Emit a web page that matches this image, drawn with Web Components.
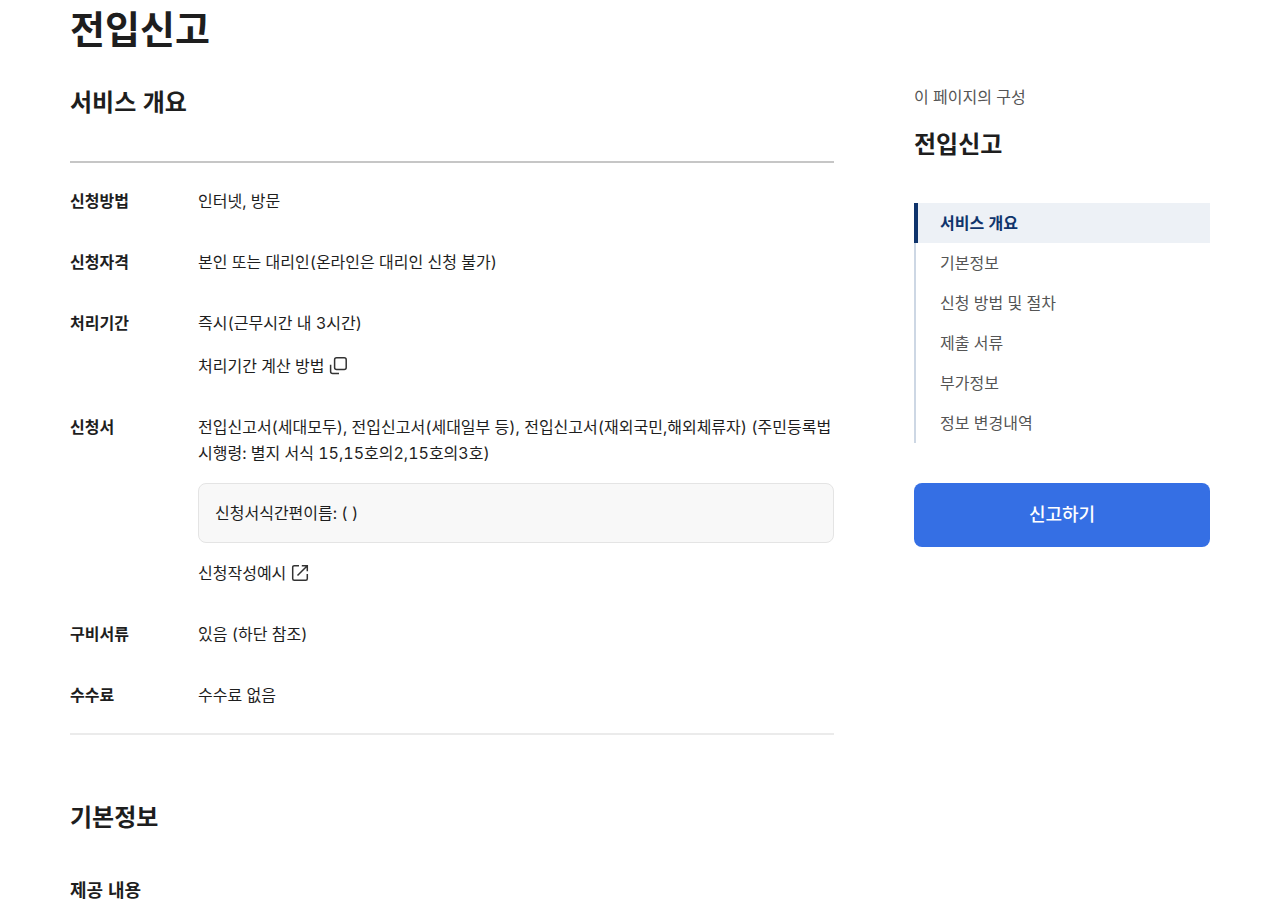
<!DOCTYPE html>
<html lang="ko">
<head>
<meta charset="utf-8">
<meta name="viewport" content="width=device-width, initial-scale=1">
<title>전입신고</title>
<style>
  :root {
    --color-text: #1e1e1e;
    --color-sub: #555;
    --color-primary: #356fe4;
    --color-navy: #0f346c;
  }
  body {
    margin: 0;
    background: #fff;
    color: var(--color-text);
    font-family: Inter, "Noto Sans CJK KR", sans-serif;
    font-size: 16px;
    line-height: 26px;
    font-variant-numeric: tabular-nums;
    word-break: keep-all;
  }
</style>
</head>
<body>
<gov-page>
  <gov-title level="1">전입신고</gov-title>

  <gov-section>
    <gov-title level="2">서비스 개요</gov-title>
    <gov-info-list>
      <gov-info-row label="신청방법"><span>인터넷, 방문</span></gov-info-row>
      <gov-info-row label="신청자격"><span>본인 또는 대리인(온라인은 대리인 신청 불가)</span></gov-info-row>
      <gov-info-row label="처리기간">
        <span>즉시(근무시간 내 3시간)</span>
        <gov-text-action icon="popup">처리기간 계산 방법</gov-text-action>
      </gov-info-row>
      <gov-info-row label="신청서">
        <span>전입신고서(세대모두), 전입신고서(세대일부 등), 전입신고서(재외국민,해외체류자) (주민등록법 시행령: 별지 서식 15,15호의2,15호의3호)</span>
        <gov-note>신청서식간편이름: ( )</gov-note>
        <gov-text-action icon="external" href="#example">신청작성예시</gov-text-action>
      </gov-info-row>
      <gov-info-row label="구비서류"><span>있음 (하단 참조)</span></gov-info-row>
      <gov-info-row label="수수료"><span>수수료 없음</span></gov-info-row>
    </gov-info-list>
  </gov-section>

  <gov-section>
    <gov-title level="2">기본정보</gov-title>
    <gov-title level="3">제공 내용</gov-title>
  </gov-section>

  <gov-side-nav slot="aside" caption="이 페이지의 구성" heading="전입신고">
    <gov-nav-item href="#summary" current>서비스 개요</gov-nav-item>
    <gov-nav-item href="#basic">기본정보</gov-nav-item>
    <gov-nav-item href="#process">신청 방법 및 절차</gov-nav-item>
    <gov-nav-item href="#documents">제출 서류</gov-nav-item>
    <gov-nav-item href="#extra">부가정보</gov-nav-item>
    <gov-nav-item href="#history">정보 변경내역</gov-nav-item>
    <gov-button slot="action">신고하기</gov-button>
  </gov-side-nav>
</gov-page>

<script>
// Base: attaches the shadow root and fills it with render()
class GovElement extends HTMLElement {
  constructor() {
    super()
    this.attachShadow({mode: 'open'})
  }

  connectedCallback() {
    this.shadowRoot.innerHTML = this.render()
  }
}

// Two columns: the article and the side navigation
class GovPage extends GovElement {
  render() {
    return `
      <style>
        :host {
          display: flex;
          align-items: flex-start;
          gap: 80px;
          padding: 0 70px;
        }
        main {
          flex: 1;
          min-width: 0;
        }
        aside {
          flex: 0 0 296px;
          padding-top: 84px;
        }
        @media (max-width: 900px) {
          :host { flex-direction: column; gap: 40px; padding: 0 24px; }
          main { flex: none; width: 100%; }
          aside { flex: none; width: 100%; padding-top: 0; }
        }
      </style>
      <main><slot></slot></main>
      <aside><slot name="aside"></slot></aside>
    `
  }
}

class GovTitle extends GovElement {
  render() {
    const level = this.getAttribute('level') || '2'
    return `
      <style>
        :host { display: block; }
        h1, h2, h3 { margin: 0; font-weight: 700; }
        h1 { font-size: 38px; line-height: 58px; }
        h2 { font-size: 24px; line-height: 36px; }
        h3 { font-size: 18px; line-height: 30px; }
      </style>
      <h${level}><slot></slot></h${level}>
    `
  }
}

class GovSection extends GovElement {
  render() {
    return `
      <style>
        :host {
          display: flex;
          flex-direction: column;
          gap: 40px;
          padding: 27px 0 38px;
        }
      </style>
      <slot></slot>
    `
  }
}

class GovInfoList extends GovElement {
  render() {
    return `
      <style>
        :host {
          display: flex;
          flex-direction: column;
          gap: 35px;
          padding: 25px 0;
          border-top: 2px solid #c6c6c6;
          border-bottom: 2px solid #ebebeb;
        }
      </style>
      <slot></slot>
    `
  }
}

class GovInfoRow extends GovElement {
  render() {
    return `
      <style>
        :host {
          display: grid;
          grid-template-columns: 112px minmax(0, 1fr);
          gap: 16px;
        }
        strong { font-weight: 700; }
        div {
          display: flex;
          flex-direction: column;
          gap: 17px;
        }
      </style>
      <strong>${this.getAttribute('label')}</strong>
      <div><slot></slot></div>
    `
  }
}

const ICONS = {
  popup: `
    <rect x="6.6" y="1.8" width="11.6" height="11.6" rx="2"/>
    <path d="M2.6 8.8v6.6a2 2 0 0 0 2 2H11"/>`,
  external: `
    <path d="M9 2.7H4.2a1.5 1.5 0 0 0-1.5 1.5v11.6a1.5 1.5 0 0 0 1.5 1.5h11.6a1.5 1.5 0 0 0 1.5-1.5V11"/>
    <path d="M11.8 2.7h5.5v5.5M17.3 2.7L7.5 12.5"/>`
}

// Text with an icon behind it: a link when it has an href, else a button
class GovTextAction extends GovElement {
  render() {
    const href = this.getAttribute('href')
    const tag = href ? 'a' : 'button'
    return `
      <style>
        :host { display: flex; }
        a, button {
          display: inline-flex;
          align-items: center;
          gap: 4px;
          margin: 0;
          padding: 0;
          border: 0;
          background: none;
          color: inherit;
          font: inherit;
          text-decoration: none;
          cursor: pointer;
        }
        svg {
          width: 20px;
          height: 20px;
          fill: none;
          stroke: #333;
          stroke-width: 1.5;
        }
      </style>
      <${tag} ${href ? `href="${href}"` : 'type="button"'}>
        <slot></slot>
        <svg viewBox="0 0 20 20" aria-hidden="true">${ICONS[this.getAttribute('icon')]}</svg>
      </${tag}>
    `
  }
}

class GovNote extends GovElement {
  render() {
    return `
      <style>
        :host {
          display: block;
          padding: 16px;
          border: 1px solid #e4e4e4;
          border-radius: 8px;
          background: #f8f8f8;
        }
      </style>
      <slot></slot>
    `
  }
}

class GovSideNav extends GovElement {
  render() {
    return `
      <style>
        :host { display: block; }
        p { margin: 0 0 17px; color: var(--color-sub); }
        h2 { margin: 0 0 40px; font-size: 24px; line-height: 36px; font-weight: 700; }
        nav { margin-bottom: 40px; }
      </style>
      <p>${this.getAttribute('caption')}</p>
      <h2>${this.getAttribute('heading')}</h2>
      <nav><slot></slot></nav>
      <slot name="action"></slot>
    `
  }
}

class GovNavItem extends GovElement {
  render() {
    return `
      <style>
        :host { display: block; }
        a {
          display: block;
          padding: 7px 16px 7px 24px;
          border-left: 2px solid #cdd7e4;
          color: var(--color-sub);
          text-decoration: none;
        }
        :host([current]) a {
          padding-left: 22px;
          border-left: 4px solid var(--color-navy);
          background: #edf1f6;
          color: var(--color-navy);
          font-weight: 700;
        }
      </style>
      <a href="${this.getAttribute('href')}"><slot></slot></a>
    `
  }
}

class GovButton extends GovElement {
  render() {
    return `
      <style>
        :host { display: block; }
        button {
          width: 100%;
          min-height: 64px;
          padding: 0 24px;
          border: 0;
          border-radius: 8px;
          background: var(--color-primary);
          color: #fff;
          font: inherit;
          font-size: 18px;
          font-weight: 500;
          cursor: pointer;
        }
      </style>
      <button type="button"><slot></slot></button>
    `
  }
}

customElements.define('gov-page', GovPage)
customElements.define('gov-title', GovTitle)
customElements.define('gov-section', GovSection)
customElements.define('gov-info-list', GovInfoList)
customElements.define('gov-info-row', GovInfoRow)
customElements.define('gov-text-action', GovTextAction)
customElements.define('gov-note', GovNote)
customElements.define('gov-side-nav', GovSideNav)
customElements.define('gov-nav-item', GovNavItem)
customElements.define('gov-button', GovButton)
</script>
</body>
</html>
